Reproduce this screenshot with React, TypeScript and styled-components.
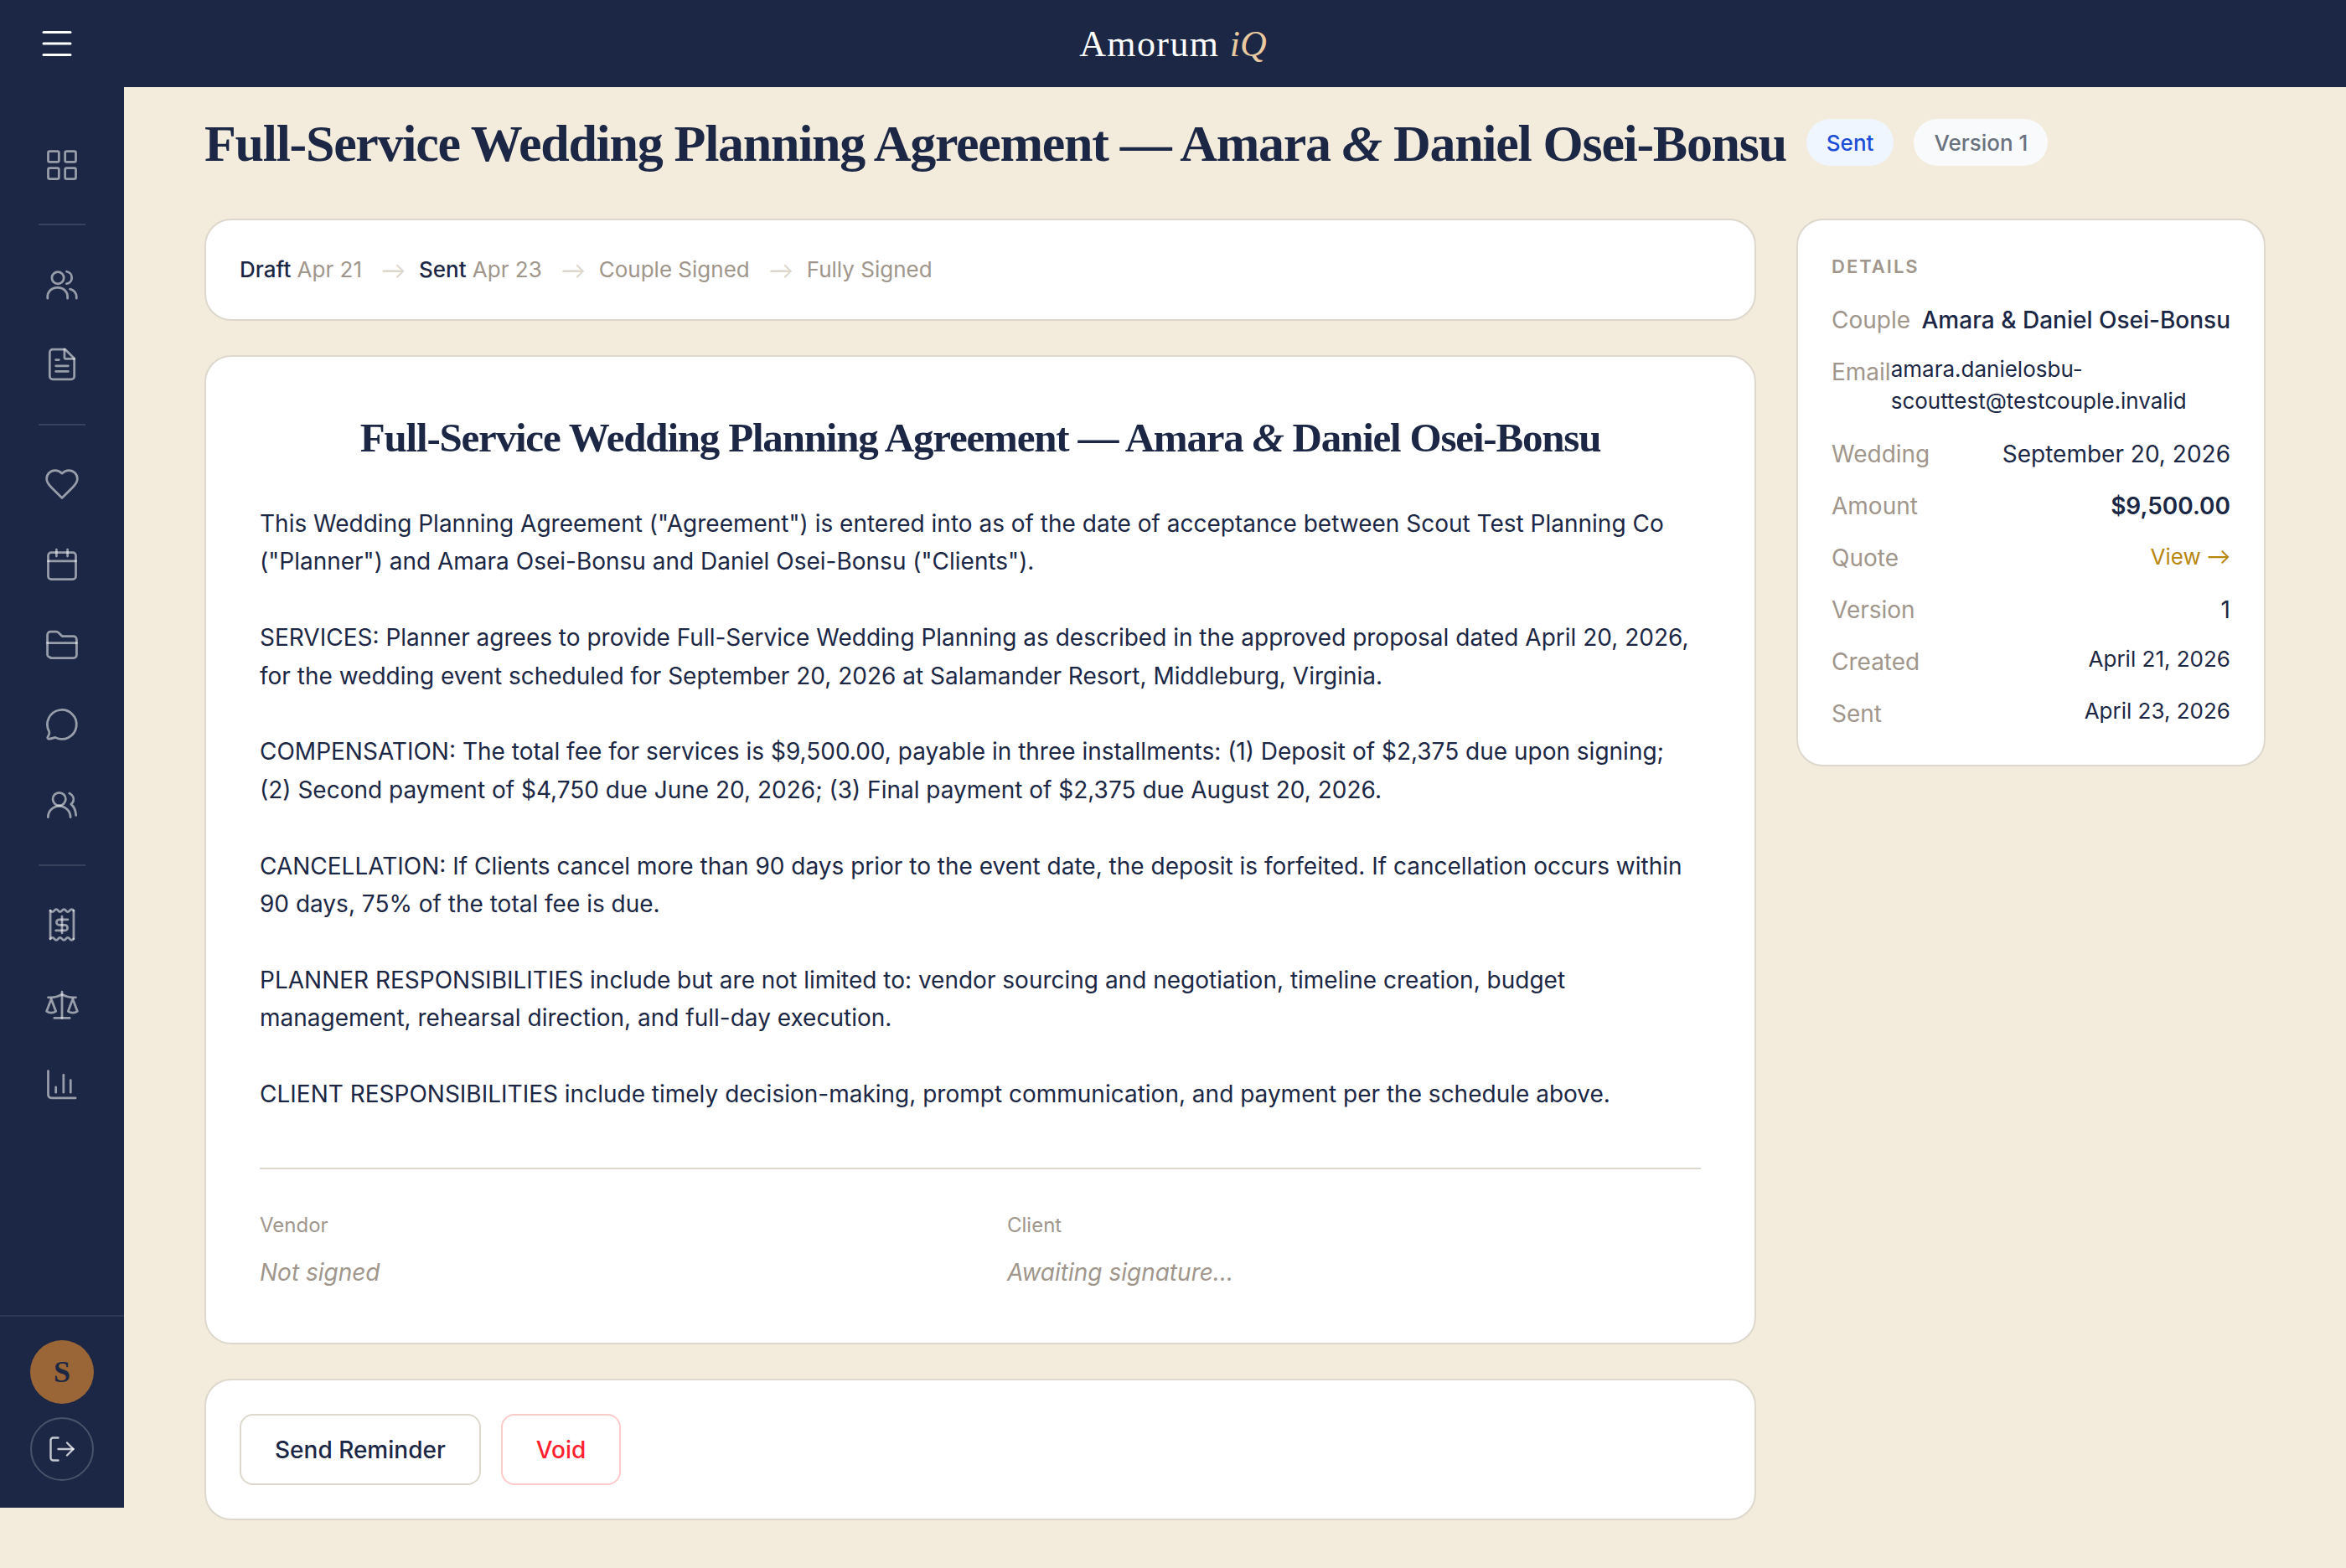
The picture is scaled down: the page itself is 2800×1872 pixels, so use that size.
import React from 'react';
import styled, { createGlobalStyle } from 'styled-components';

const navy = '#1b2744';
const cream = '#f3ebdc';
const line = '#ddd8cd';
const muted = '#a0968c';

const GlobalStyle = createGlobalStyle`
  html, body {
    margin: 0;
    padding: 0;
    background: ${cream};
  }
  body {
    font-family: Inter, "Liberation Sans", sans-serif;
    color: ${navy};
  }
  * {
    box-sizing: border-box;
  }
`;

const Page = styled.div`
  display: flex;
  flex-direction: column;
  width: 2800px;
  height: 1872px;
  overflow: hidden;
`;

const TopBar = styled.header`
  display: grid;
  grid-template-columns: 148px 1fr 148px;
  align-items: center;
  height: 104px;
  flex-shrink: 0;
  background: ${navy};
`;

const MenuButton = styled.div`
  display: flex;
  padding-left: 44px;
  color: #fff;
`;

const Brand = styled.div`
  text-align: center;
  font-family: "Liberation Serif", serif;
  font-size: 44px;
  letter-spacing: 1.4px;
  color: #fff;

  em {
    color: #e8c9a0;
    font-style: italic;
    letter-spacing: 0;
  }
`;

const Body = styled.div`
  display: flex;
  flex: 1;
  min-height: 0;
`;

const Sidebar = styled.aside`
  display: flex;
  flex-direction: column;
  width: 148px;
  height: 1696px;
  flex-shrink: 0;
  background: ${navy};
`;

const Nav = styled.nav`
  display: flex;
  flex-direction: column;
  padding-top: 45px;
`;

const NavItem = styled.div`
  display: flex;
  align-items: center;
  justify-content: center;
  height: 95.75px;
  color: rgba(255, 255, 255, 0.55);
`;

const NavDivider = styled.div`
  width: 56px;
  height: 2px;
  margin: 22.5px auto;
  background: rgba(255, 255, 255, 0.13);
`;

const SideFoot = styled.div`
  display: flex;
  flex-direction: column;
  align-items: center;
  gap: 16px;
  margin-top: auto;
  padding: 28px 0 32px;
  border-top: 2px solid rgba(255, 255, 255, 0.08);
`;

const Avatar = styled.div`
  display: flex;
  align-items: center;
  justify-content: center;
  width: 76px;
  height: 76px;
  border-radius: 50%;
  background: #9a6637;
  font-family: "Liberation Serif", serif;
  font-size: 36px;
  font-weight: 700;
  color: ${navy};
`;

const LogoutButton = styled.div`
  display: flex;
  align-items: center;
  justify-content: center;
  width: 76px;
  height: 76px;
  border: 2px solid rgba(255, 255, 255, 0.2);
  border-radius: 50%;
  color: rgba(255, 255, 255, 0.75);
`;

const Main = styled.main`
  flex: 1;
  min-width: 0;
  padding: 31px 96px 0;
`;

const TitleRow = styled.div`
  display: flex;
  align-items: center;
  gap: 24px;
  height: 70px;
  margin-bottom: 56px;
`;

const PageTitle = styled.h1`
  margin: 0;
  padding-top: 2px;
  font-family: "Liberation Serif", serif;
  font-size: 62px;
  line-height: 70px;
  font-weight: 700;
  letter-spacing: -1.3px;
  white-space: nowrap;
  color: ${navy};
`;

const Badge = styled.span<{ $tone: 'blue' | 'gray' }>`
  display: inline-flex;
  align-items: center;
  height: 56px;
  padding: 0 24px;
  border-radius: 28px;
  font-size: 26px;
  font-weight: 500;
  background: ${(p) => (p.$tone === 'blue' ? '#eff6ff' : '#f9fafb')};
  color: ${(p) => (p.$tone === 'blue' ? '#1d4ed8' : '#6b7280')};
`;

const Columns = styled.div`
  display: grid;
  grid-template-columns: 1fr 560px;
  gap: 48px;
  align-items: start;
`;

const LeftColumn = styled.div`
  display: flex;
  flex-direction: column;
  gap: 41px;
`;

const Card = styled.section`
  background: #fff;
  border: 2px solid ${line};
  border-radius: 32px;
`;

const StepCard = styled(Card)`
  display: flex;
  align-items: center;
  gap: 16px;
  padding: 40px;
  font-size: 26px;
  line-height: 38px;
`;

const Step = styled.div`
  color: ${muted};

  b {
    font-weight: 500;
    color: ${navy};
  }
`;

const StepArrow = styled.span`
  margin-left: 7px;
  font-family: Lato, sans-serif;
  font-size: 29px;
  color: ${line};
`;

const DocCard = styled(Card)`
  padding: 64px;
`;

const DocTitle = styled.h2`
  margin: 0 0 47px;
  font-family: "Liberation Serif", serif;
  font-size: 49px;
  line-height: 66px;
  font-weight: 700;
  letter-spacing: -1.2px;
  text-align: center;
  white-space: nowrap;
  color: ${navy};
`;

const DocText = styled.p`
  margin: 0 0 45.4px;
  font-size: 28px;
  line-height: 45.4px;
  color: ${navy};

  &:last-of-type {
    margin-bottom: 0;
  }
`;

const SignRule = styled.div`
  height: 2px;
  margin: 65px 0 48px;
  background: ${line};
`;

const SignGrid = styled.div`
  display: grid;
  grid-template-columns: 1fr 1fr;
  gap: 64px;
`;

const SignLabel = styled.div`
  font-size: 24px;
  line-height: 38px;
  color: ${muted};
`;

const SignValue = styled.div`
  margin-top: 18px;
  font-size: 28px;
  line-height: 39px;
  font-style: italic;
  color: ${muted};
`;

const ActionCard = styled(Card)`
  display: flex;
  gap: 24px;
  padding: 40px;
`;

const ActionButton = styled.button<{ $danger?: boolean }>`
  height: 85px;
  padding: 0 40px;
  background: #fff;
  border: 2px solid ${(p) => (p.$danger ? '#fecaca' : line)};
  border-radius: 16px;
  font-family: inherit;
  font-size: 28px;
  font-weight: 500;
  color: ${(p) => (p.$danger ? '#ff1f2f' : navy)};
`;

const DetailCard = styled(Card)`
  padding: 40px;
`;

const DetailHeading = styled.h3`
  margin: 0 0 28px;
  font-size: 22px;
  line-height: 30px;
  font-weight: 600;
  letter-spacing: 2px;
  text-transform: uppercase;
  color: ${muted};
`;

const DetailList = styled.div`
  display: flex;
  flex-direction: column;
  gap: 20px;
`;

const DetailRow = styled.div`
  display: flex;
  justify-content: space-between;
  align-items: flex-start;
  font-size: 28px;
  line-height: 42px;
`;

const DetailLabel = styled.span`
  color: ${muted};
`;

const DetailValue = styled.span<{ $small?: boolean; $strong?: boolean; $medium?: boolean; $link?: boolean }>`
  margin: ${(p) => (p.$small ? '-1px 0 3px' : '0')};
  font-size: ${(p) => (p.$small ? '26px' : '28px')};
  line-height: ${(p) => (p.$small ? '38px' : '42px')};
  font-weight: ${(p) => (p.$strong ? 600 : p.$medium ? 500 : 400)};
  color: ${(p) => (p.$link ? '#b8860b' : navy)};
`;

const ViewArrow = styled.span`
  font-family: Lato, sans-serif;
  font-size: 28px;
`;

const Icon = ({ size = 44, stroke = 1.5, children }: { size?: number; stroke?: number; children: React.ReactNode }) => (
  <svg
    width={size}
    height={size}
    viewBox="0 0 24 24"
    fill="none"
    stroke="currentColor"
    strokeWidth={stroke}
    strokeLinecap="round"
    strokeLinejoin="round"
  >
    {children}
  </svg>
);

const navIcons: Record<string, React.ReactNode> = {
  grid: (
    <>
      <rect x="3" y="3" width="7" height="7" rx="1" />
      <rect x="14" y="3" width="7" height="7" rx="1" />
      <rect x="3" y="14" width="7" height="7" rx="1" />
      <rect x="14" y="14" width="7" height="7" rx="1" />
    </>
  ),
  people: (
    <>
      <circle cx="9.3" cy="7.5" r="3.9" />
      <path d="M2.6 20.8v-1a6 6 0 0 1 6-6h1a6 6 0 0 1 6 6v1" />
      <path d="M15 3.4a4 4 0 0 1 0 7.9" />
      <path d="M17.2 14.8a5 5 0 0 1 4.2 5v1" />
    </>
  ),
  doc: (
    <>
      <path d="M14 2.2H6a2 2 0 0 0-2 2v15.6a2 2 0 0 0 2 2h12a2 2 0 0 0 2-2V8.2z" />
      <path d="M13.6 2.2v5.6a.6.6 0 0 0 .6.6H20" />
      <path d="M10 9H8" />
      <path d="M16 13H8" />
      <path d="M16 16.6H8" />
    </>
  ),
  heart: (
    <path d="M19 14c1.49-1.46 3-3.21 3-5.5A5.5 5.5 0 0 0 16.5 3c-1.76 0-3 .5-4.5 2-1.5-1.5-2.74-2-4.5-2A5.5 5.5 0 0 0 2 8.5c0 2.3 1.5 4.05 3 5.5l7 7Z" />
  ),
  calendar: (
    <>
      <rect x="3" y="4.2" width="18" height="17.4" rx="2" />
      <path d="M8.4 2.2v4.4" />
      <path d="M15.6 2.2v4.4" />
      <path d="M3 9.8h18" />
    </>
  ),
  folder: (
    <>
      <path d="M4.5 20.5h15a2 2 0 0 0 2-2V8.4a2 2 0 0 0-2-2h-7.3l-2.5-2.4a2 2 0 0 0-1.4-.6H4.5a2 2 0 0 0-2 2v12.7a2 2 0 0 0 2 2z" />
      <path d="M2.5 10.7h19" />
    </>
  ),
  chat: (
    <path d="M7.6 20.4A9.5 9.5 0 1 0 3.6 16.5c.3.7-.2 2.5-.9 3.7-.4.7.2 1.3 1 1.2 1.5-.2 2.8-.7 3.9-1z" />
  ),
  team: (
    <>
      <circle cx="10.2" cy="8.2" r="4.2" />
      <path d="M2.9 20a7.3 7.3 0 0 1 14.6 0" />
      <path d="M16.8 4.4c2 1 3.1 3 2.6 5-.3 1-.9 1.6-1.5 2.1 2 1.6 3 4 3.2 7.3" />
    </>
  ),
  receipt: (
    <>
      <path d="M4.4 2.8q1.3 1.6 2.6 0t2.5 0 2.5 0 2.5 0 2.5 0 2.5 0" />
      <path d="M4.4 21.2q1.3-1.6 2.6 0t2.5 0 2.5 0 2.5 0 2.5 0 2.5 0" />
      <path d="M4.4 2.8v18.4" />
      <path d="M19.6 2.8v18.4" />
      <path d="M12 6.6v10.8" />
      <path d="M15.8 8.6h-5.6a1.8 1.8 0 0 0 0 3.6h3.6a1.8 1.8 0 0 1 0 3.6H8" />
    </>
  ),
  scale: (
    <>
      <path d="m16 16 3-8 3 8c-.87.65-1.92 1-3 1s-2.13-.35-3-1Z" />
      <path d="m2 16 3-8 3 8c-.87.65-1.92 1-3 1s-2.13-.35-3-1Z" />
      <path d="M7 20.4h10" />
      <path d="M12 3.4v17" />
      <path d="M3 7h2c2 0 5-1 7-2 2 1 5 2 7 2h2" />
    </>
  ),
  chart: (
    <>
      <path d="M3 3v15.6a2 2 0 0 0 2 2h15.8" />
      <path d="M8 13.6v3.4" />
      <path d="M13 5.6V17" />
      <path d="M17.6 9v8" />
    </>
  ),
};

const navGroups = [['grid'], ['people', 'doc'], ['heart', 'calendar', 'folder', 'chat', 'team'], ['receipt', 'scale', 'chart']];

const paragraphs = [
  'This Wedding Planning Agreement ("Agreement") is entered into as of the date of acceptance between Scout Test Planning Co ("Planner") and Amara Osei-Bonsu and Daniel Osei-Bonsu ("Clients").',
  'SERVICES: Planner agrees to provide Full-Service Wedding Planning as described in the approved proposal dated April 20, 2026, for the wedding event scheduled for September 20, 2026 at Salamander Resort, Middleburg, Virginia.',
  'COMPENSATION: The total fee for services is $9,500.00, payable in three installments: (1) Deposit of $2,375 due upon signing; (2) Second payment of $4,750 due June 20, 2026; (3) Final payment of $2,375 due August 20, 2026.',
  'CANCELLATION: If Clients cancel more than 90 days prior to the event date, the deposit is forfeited. If cancellation occurs within 90 days, 75% of the total fee is due.',
  'PLANNER RESPONSIBILITIES include but are not limited to: vendor sourcing and negotiation, timeline creation, budget management, rehearsal direction, and full-day execution.',
  'CLIENT RESPONSIBILITIES include timely decision-making, prompt communication, and payment per the schedule above.',
];

export default function App() {
  return (
    <Page>
      <GlobalStyle />
      <TopBar>
        <MenuButton>
          <Icon size={48}>
            <path d="M4 5.25h16" />
            <path d="M4 12h16" />
            <path d="M4 18.75h16" />
          </Icon>
        </MenuButton>
        <Brand>
          Amorum <em>iQ</em>
        </Brand>
      </TopBar>
      <Body>
        <Sidebar>
          <Nav>
            {navGroups.map((group, i) => (
              <React.Fragment key={group[0]}>
                {i > 0 && <NavDivider />}
                {group.map((name) => (
                  <NavItem key={name}>
                    <Icon>{navIcons[name]}</Icon>
                  </NavItem>
                ))}
              </React.Fragment>
            ))}
          </Nav>
          <SideFoot>
            <Avatar>S</Avatar>
            <LogoutButton>
              <Icon size={36} stroke={1.6}>
                <path d="M9 21H5a2 2 0 0 1-2-2V5a2 2 0 0 1 2-2h4" />
                <path d="m16 17 5-5-5-5" />
                <path d="M21 12H9" />
              </Icon>
            </LogoutButton>
          </SideFoot>
        </Sidebar>
        <Main>
          <TitleRow>
            <PageTitle>
              Full-Service Wedding Planning Agreement — Amara <i>&amp;</i> Daniel Osei-Bonsu
            </PageTitle>
            <Badge $tone="blue">Sent</Badge>
            <Badge $tone="gray">Version 1</Badge>
          </TitleRow>
          <Columns>
            <LeftColumn>
              <StepCard>
                <Step>
                  <b>Draft</b> Apr 21
                </Step>
                <StepArrow>→</StepArrow>
                <Step>
                  <b>Sent</b> Apr 23
                </Step>
                <StepArrow>→</StepArrow>
                <Step>Couple Signed</Step>
                <StepArrow>→</StepArrow>
                <Step>Fully Signed</Step>
              </StepCard>
              <DocCard>
                <DocTitle>
                  Full-Service Wedding Planning Agreement — Amara <i>&amp;</i> Daniel Osei-Bonsu
                </DocTitle>
                {paragraphs.map((text) => (
                  <DocText key={text.slice(0, 12)}>{text}</DocText>
                ))}
                <SignRule />
                <SignGrid>
                  <div>
                    <SignLabel>Vendor</SignLabel>
                    <SignValue>Not signed</SignValue>
                  </div>
                  <div>
                    <SignLabel>Client</SignLabel>
                    <SignValue>Awaiting signature...</SignValue>
                  </div>
                </SignGrid>
              </DocCard>
              <ActionCard>
                <ActionButton>Send Reminder</ActionButton>
                <ActionButton $danger>Void</ActionButton>
              </ActionCard>
            </LeftColumn>
            <DetailCard>
              <DetailHeading>Details</DetailHeading>
              <DetailList>
                <DetailRow>
                  <DetailLabel>Couple</DetailLabel>
                  <DetailValue $medium>Amara &amp; Daniel Osei-Bonsu</DetailValue>
                </DetailRow>
                <DetailRow>
                  <DetailLabel>Email</DetailLabel>
                  <DetailValue $small>amara.danielosbu-scouttest@testcouple.invalid</DetailValue>
                </DetailRow>
                <DetailRow>
                  <DetailLabel>Wedding</DetailLabel>
                  <DetailValue>September 20, 2026</DetailValue>
                </DetailRow>
                <DetailRow>
                  <DetailLabel>Amount</DetailLabel>
                  <DetailValue $strong>$9,500.00</DetailValue>
                </DetailRow>
                <DetailRow>
                  <DetailLabel>Quote</DetailLabel>
                  <DetailValue $small $link>
                    View <ViewArrow>→</ViewArrow>
                  </DetailValue>
                </DetailRow>
                <DetailRow>
                  <DetailLabel>Version</DetailLabel>
                  <DetailValue>1</DetailValue>
                </DetailRow>
                <DetailRow>
                  <DetailLabel>Created</DetailLabel>
                  <DetailValue $small>April 21, 2026</DetailValue>
                </DetailRow>
                <DetailRow>
                  <DetailLabel>Sent</DetailLabel>
                  <DetailValue $small>April 23, 2026</DetailValue>
                </DetailRow>
              </DetailList>
            </DetailCard>
          </Columns>
        </Main>
      </Body>
    </Page>
  );
}
